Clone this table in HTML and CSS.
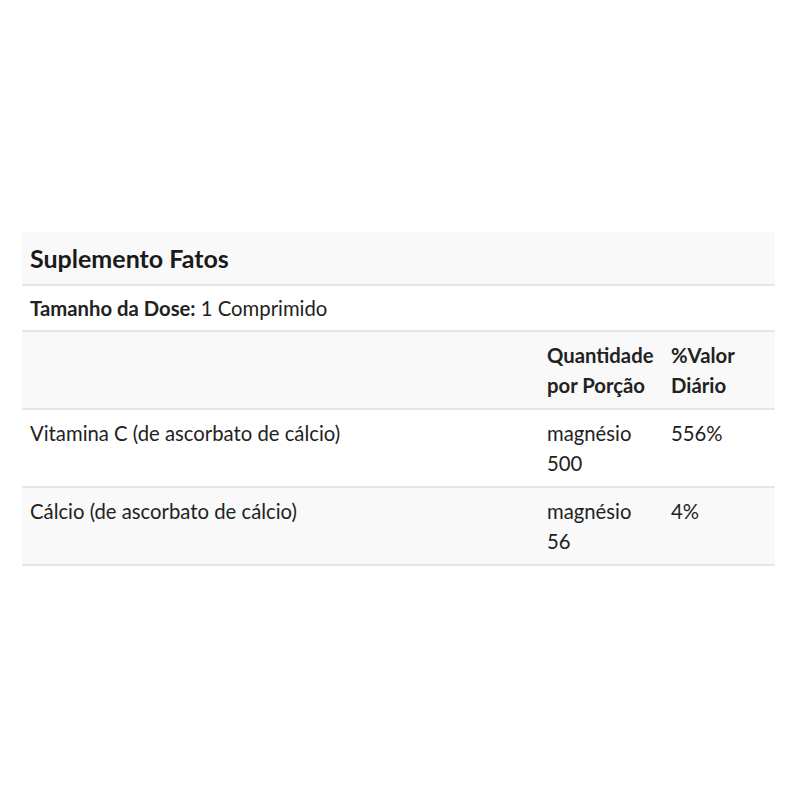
FILE: index.html
```html
<!DOCTYPE html>
<html lang="pt">
<head>
<meta charset="utf-8">
<link rel="stylesheet" href="styles.css">
</head>
<body>
<div class="page">
  <table class="facts">
    <colgroup>
      <col class="c1"><col class="c2"><col class="c3">
    </colgroup>
    <tr class="title-row"><th colspan="3" class="title">Suplemento Fatos</th></tr>
    <tr class="dose-row"><td colspan="3" class="dose"><b>Tamanho da Dose:</b> 1 Comprimido</td></tr>
    <tr class="head-row shade">
      <th></th>
      <th>Quantidade por Porção</th>
      <th>%Valor Diário</th>
    </tr>
    <tr>
      <td>Vitamina C (de ascorbato de cálcio)</td>
      <td>magnésio 500</td>
      <td>556%</td>
    </tr>
    <tr class="shade">
      <td>Cálcio (de ascorbato de cálcio)</td>
      <td>magnésio 56</td>
      <td>4%</td>
    </tr>
  </table>
</div>
</body>
</html>
```

FILE: styles.css
```css
html, body {
  margin: 0;
  padding: 0;
  background: #fff;
}
.page {
  padding: 232px 25px 0 22px;
}
.facts {
  width: 753px;
  table-layout: fixed;
  border-collapse: collapse;
  font-family: Lato, "Open Sans", sans-serif;
  font-size: 20.3px;
  color: #222;
}
.c1 { width: 517px; }
.c2 { width: 124px; }
.c3 { width: 112px; }
.facts td, .facts th {
  padding: 8px 8px;
  line-height: 30px;
  text-align: left;
  vertical-align: top;
  border-bottom: 2px solid #e6e6e6;
}
.facts th { font-weight: 700; }
.title-row { background: #f9f9f9; }
.facts .title {
  font-size: 25px;
  line-height: 36px;
  font-weight: 700;
  color: #1a1a1a;
}
.facts .dose {
  padding-top: 7px;
  padding-bottom: 7px;
}
.dose b { font-weight: 700; }
.shade { background: #f9f9f9; }
```
